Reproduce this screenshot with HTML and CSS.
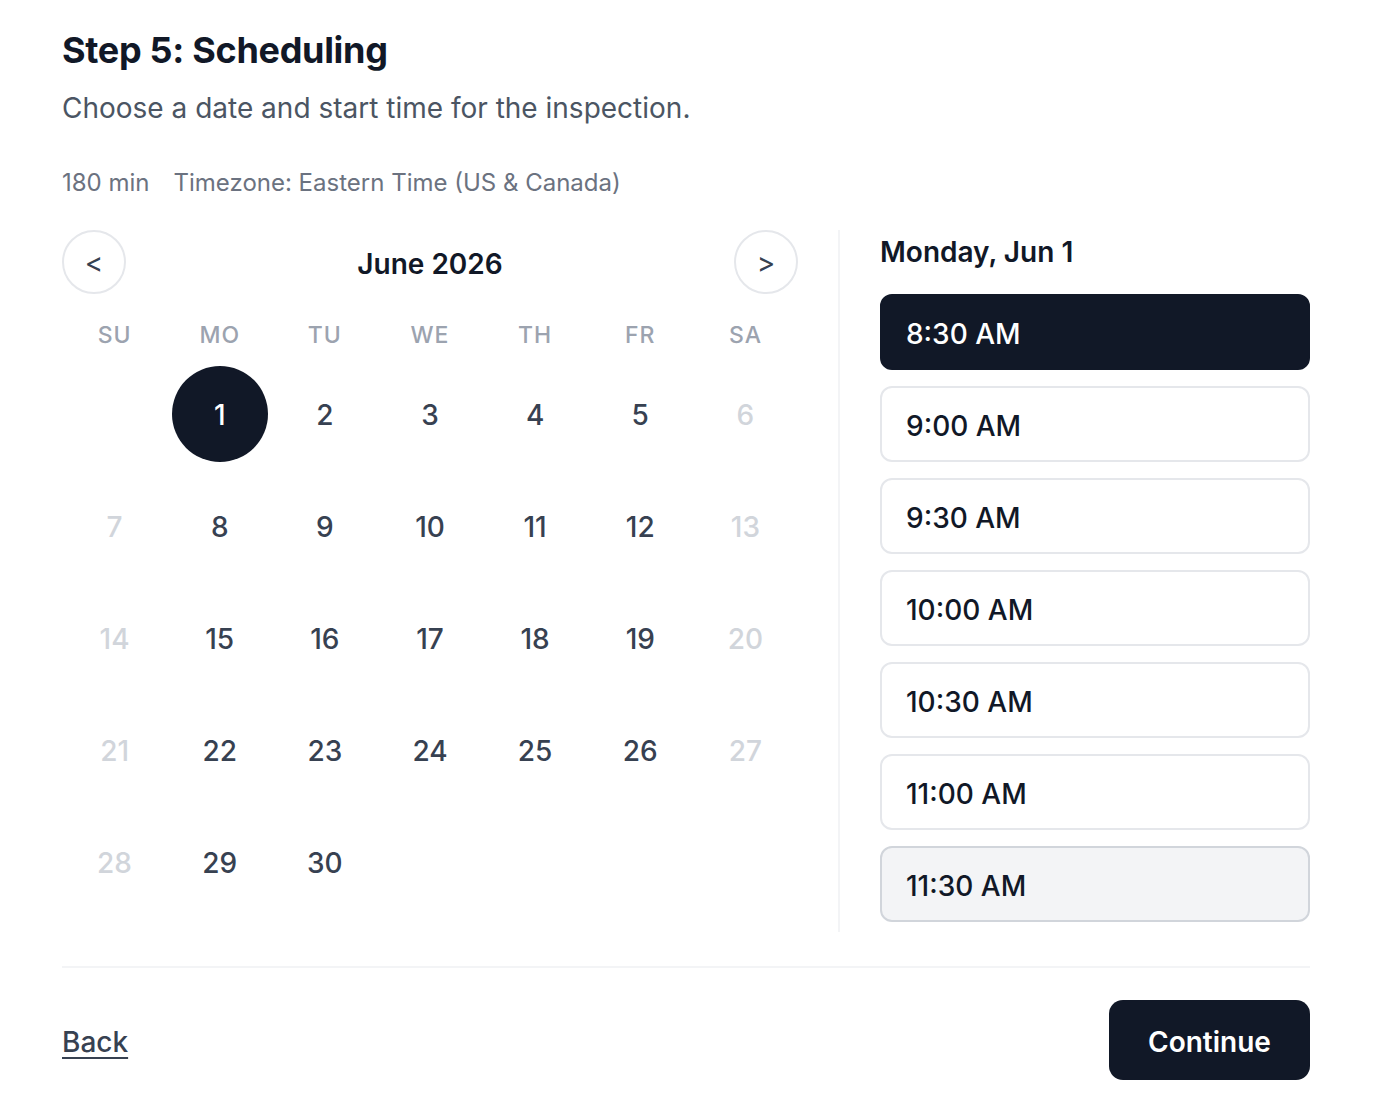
FILE: index.html
```html
<!DOCTYPE html>
<html lang="en">
<head>
  <meta charset="UTF-8">
  <meta name="viewport" content="width=device-width, initial-scale=1">
  <title>Inspection booking | Scheduling</title>
  <link rel="stylesheet" href="styles.css">
</head>
<body>

  <div class="wizard">
    <h1>Step 5: Scheduling</h1>
    <p class="lead">Choose a date and start time for the inspection.</p>

    <div class="meta">
      <span>180 min</span>
      <span>Timezone: Eastern Time (US &amp; Canada)</span>
    </div>

    <div class="scheduler">
      <!-- Month calendar -->
      <div class="calendar">
        <div class="cal-nav">
          <button class="nav-btn" aria-label="Previous month">&lt;</button>
          <div class="month">June 2026</div>
          <button class="nav-btn" aria-label="Next month">&gt;</button>
        </div>

        <div class="weekdays">
          <span>SU</span><span>MO</span><span>TU</span><span>WE</span><span>TH</span><span>FR</span><span>SA</span>
        </div>

        <div class="days">
          <span class="day empty"></span>
          <button class="day selected">1</button>
          <button class="day">2</button>
          <button class="day">3</button>
          <button class="day">4</button>
          <button class="day">5</button>
          <button class="day off">6</button>

          <button class="day off">7</button>
          <button class="day">8</button>
          <button class="day">9</button>
          <button class="day">10</button>
          <button class="day">11</button>
          <button class="day">12</button>
          <button class="day off">13</button>

          <button class="day off">14</button>
          <button class="day">15</button>
          <button class="day">16</button>
          <button class="day">17</button>
          <button class="day">18</button>
          <button class="day">19</button>
          <button class="day off">20</button>

          <button class="day off">21</button>
          <button class="day">22</button>
          <button class="day">23</button>
          <button class="day">24</button>
          <button class="day">25</button>
          <button class="day">26</button>
          <button class="day off">27</button>

          <button class="day off">28</button>
          <button class="day">29</button>
          <button class="day">30</button>
        </div>
      </div>

      <!-- Start times for the chosen day -->
      <div class="times">
        <h3>Monday, Jun 1</h3>
        <div class="slot-list">
          <button class="slot active">8:30 AM</button>
          <button class="slot">9:00 AM</button>
          <button class="slot">9:30 AM</button>
          <button class="slot">10:00 AM</button>
          <button class="slot">10:30 AM</button>
          <button class="slot">11:00 AM</button>
          <button class="slot hover">11:30 AM</button>
        </div>
      </div>
    </div>

    <footer class="actions">
      <a href="#" class="back-link">Back</a>
      <button class="continue-btn">Continue</button>
    </footer>
  </div>

</body>
</html>
```

FILE: styles.css
```css
body {
  font-family: Inter, 'Noto Sans', sans-serif;
  background: white;
  color: #111827;
  margin: 0;
}

.wizard {
  width: 1248px;
  margin-left: 62px;
  padding-top: 26px;
}

h1 {
  font-size: 36px;
  font-weight: 700;
  line-height: 48px;
  margin: 0;
  letter-spacing: -0.3px;
}

.lead {
  font-size: 28px;
  line-height: 40px;
  color: #4b5563;
  margin: 14px 0 0;
}

.meta {
  display: flex;
  gap: 24px;
  font-size: 24px;
  line-height: 32px;
  color: #6b7280;
  margin-top: 39px;
  margin-bottom: -1px;
}

.scheduler {
  display: grid;
  grid-template-columns: 736px 1fr;
  margin-top: 32px;
}

button {
  font-family: inherit;
  background: none;
  border: none;
  padding: 0;
  cursor: pointer;
}

/* calendar */

.cal-nav {
  display: flex;
  align-items: center;
  justify-content: space-between;
  height: 64px;
}

.nav-btn {
  width: 64px;
  height: 64px;
  border: 2px solid #e5e7eb;
  border-radius: 50%;
  font-size: 28px;
  color: #374151;
  line-height: 1;
  padding-top: 2px;
}

.month {
  font-size: 28px;
  font-weight: 600;
  padding-top: 3px;
}

.weekdays {
  display: grid;
  grid-template-columns: repeat(7, 1fr);
  text-align: center;
  font-size: 23px;
  font-weight: 500;
  letter-spacing: 1px;
  color: #9ca3af;
  line-height: 30px;
  margin-top: 26px;
}

.days {
  display: grid;
  grid-template-columns: repeat(7, 1fr);
  grid-auto-rows: 96px;
  row-gap: 16px;
  justify-items: center;
  margin-top: 16px;
}

.day {
  width: 96px;
  height: 96px;
  border-radius: 50%;
  font-size: 28px;
  font-weight: 500;
  color: #374151;
  padding-top: 2px;
}

.day.off {
  color: #d1d5db;
  cursor: default;
}

.day.selected {
  background: #111827;
  color: white;
}

/* time slots */

.times {
  border-left: 2px solid #f3f4f6;
  margin-left: 40px;
  padding-left: 40px;
  padding-bottom: 10px;
}

.times h3 {
  font-size: 28px;
  font-weight: 600;
  line-height: 40px;
  padding-top: 2px;
  margin: 0 0 22px;
}

.slot-list {
  display: flex;
  flex-direction: column;
  gap: 16px;
}

.slot {
  height: 76px;
  text-align: left;
  padding: 4px 0 0 24px;
  border: 2px solid #e5e7eb;
  border-radius: 12px;
  font-size: 28px;
  font-weight: 500;
  color: #111827;
  background: white;
}

.slot.active {
  background: #111827;
  border-color: #111827;
  color: white;
}

.slot.hover {
  background: #f3f4f6;
  border-color: #d1d5db;
}

/* footer */

.actions {
  display: flex;
  align-items: center;
  justify-content: space-between;
  border-top: 2px solid #f3f4f6;
  margin-top: 34px;
  padding-top: 32px;
}

.back-link {
  font-size: 28px;
  font-weight: 500;
  color: #374151;
  padding-top: 4px;
  text-underline-offset: 5px;
  text-decoration-thickness: 2px;
}

.continue-btn {
  width: 201px;
  height: 80px;
  padding-top: 4px;
  border-radius: 14px;
  background: #111827;
  color: white;
  font-size: 28px;
  font-weight: 600;
}
```
